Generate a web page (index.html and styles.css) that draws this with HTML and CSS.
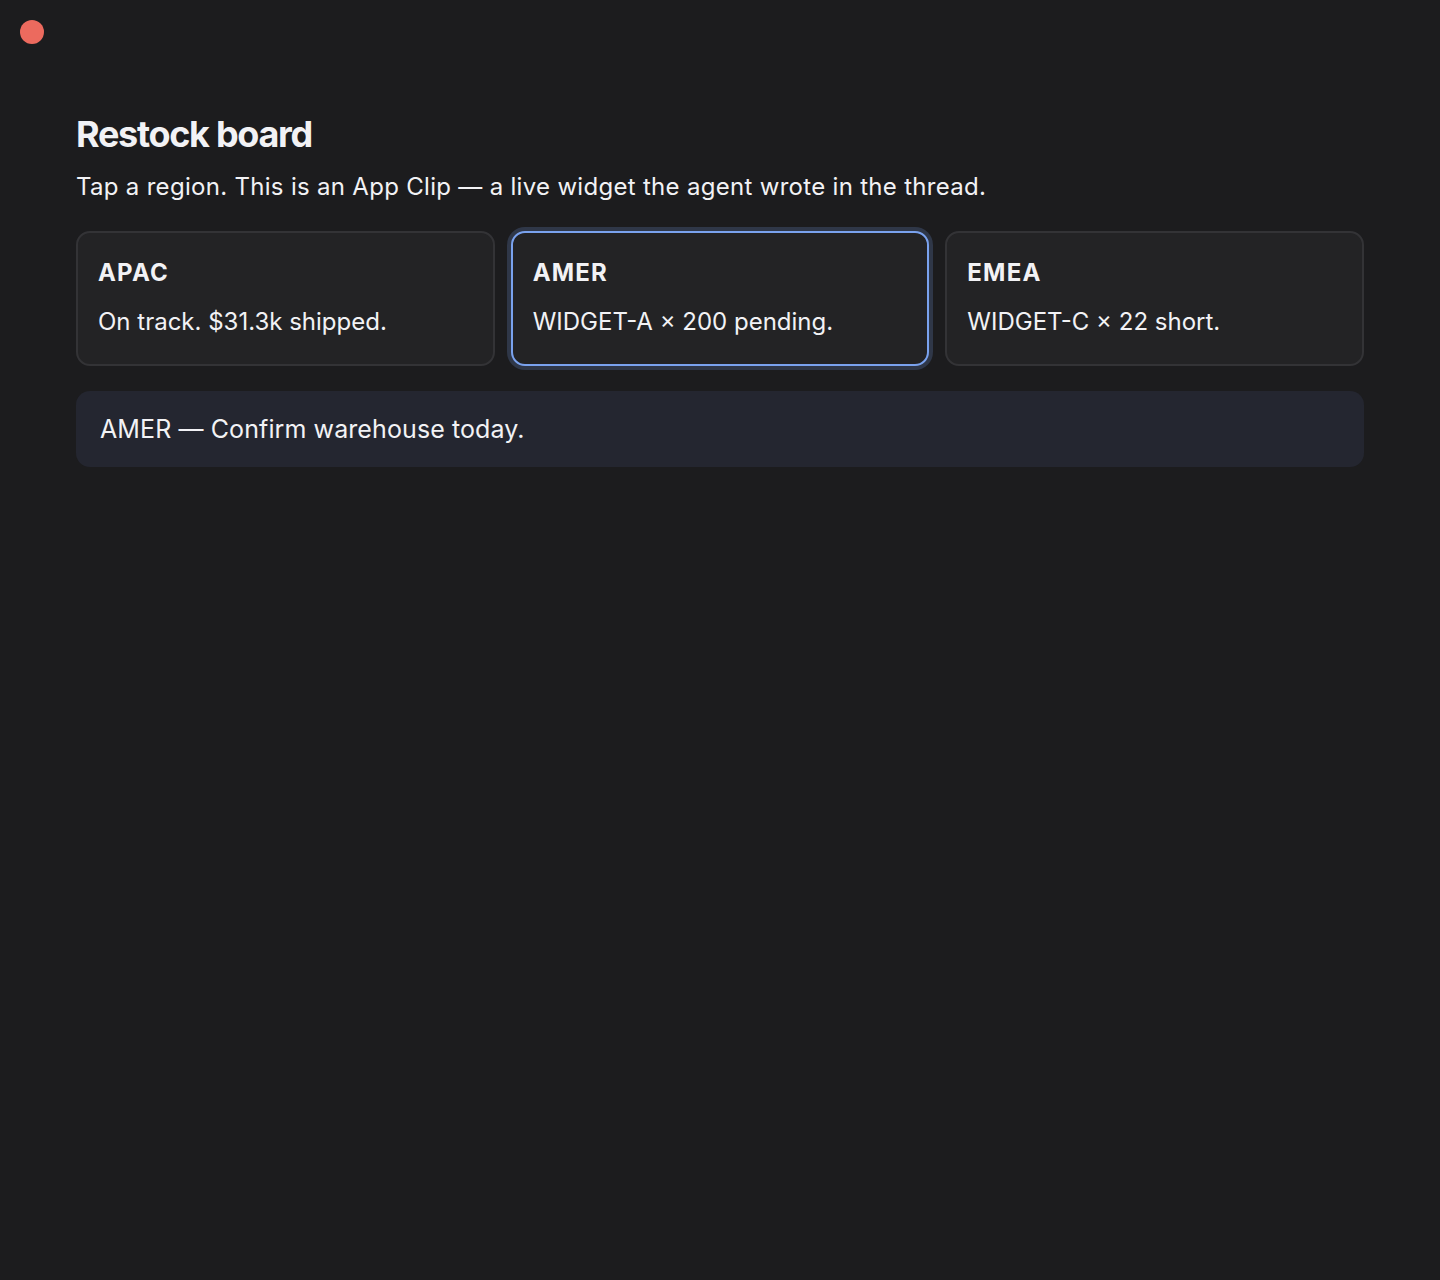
FILE: index.html
```html
<!DOCTYPE html>
<html lang="en">
<head>
<meta charset="utf-8">
<title>Restock board</title>
<link rel="stylesheet" href="styles.css">
</head>
<body>
<div class="window">
  <div class="titlebar"><span class="dot"></span></div>
  <main class="content">
    <h1 class="title">Restock board</h1>
    <p class="subtitle">Tap a region. This is an App Clip — a live widget the agent wrote in the thread.</p>
    <div class="cards">
      <button class="card">
        <span class="card-label">APAC</span>
        <span class="card-body">On track. $31.3k shipped.</span>
      </button>
      <button class="card card--active">
        <span class="card-label">AMER</span>
        <span class="card-body">WIDGET-A × 200 pending.</span>
      </button>
      <button class="card">
        <span class="card-label">EMEA</span>
        <span class="card-body">WIDGET-C × 22 short.</span>
      </button>
    </div>
    <div class="note">AMER — Confirm warehouse today.</div>
  </main>
</div>
</body>
</html>
```

FILE: styles.css
```css
html, body {
  margin: 0;
  padding: 0;
  background: #1c1c1e;
}
body {
  font-family: Inter, "Noto Sans", "Liberation Sans", sans-serif;
  color: #f2f2f5;
  min-height: 1280px;
}
.titlebar {
  height: 64px;
  padding: 20px 0 0 20px;
  box-sizing: border-box;
}
.dot {
  display: block;
  width: 24px;
  height: 24px;
  border-radius: 50%;
  background: #ec6a5e;
}
.content {
  padding: 44px 76px 0 76px;
}
.title {
  margin: 0;
  font-size: 36px;
  line-height: 52px;
  font-weight: 700;
  letter-spacing: -1.3px;
  color: #f2f2f5;
}
.subtitle {
  margin: 11px 0 0 0;
  font-size: 24px;
  line-height: 32px;
  font-weight: 400;
  letter-spacing: 0.3px;
  color: #f2f2f5;
}
.cards {
  margin-top: 28px;
  display: grid;
  grid-template-columns: repeat(3, 1fr);
  gap: 16px;
}
.card {
  display: flex;
  flex-direction: column;
  align-items: flex-start;
  gap: 19px;
  text-align: left;
  font-family: inherit;
  color: #f2f2f5;
  background: #232325;
  border: 2px solid #333336;
  border-radius: 14px;
  padding: 25px 20px 20px 20px;
  height: 135px;
  box-sizing: border-box;
  cursor: pointer;
}
.card--active {
  border-color: #7aa2ee;
  box-shadow: 0 0 0 4px #2f3748;
}
.card-label {
  font-size: 24px;
  line-height: 30px;
  font-weight: 700;
  letter-spacing: 1.2px;
}
.card-body {
  font-size: 24px;
  line-height: 30px;
  font-weight: 400;
}
.note {
  margin-top: 25px;
  background: #242630;
  border-radius: 14px;
  padding: 22px 24px 22px 24px;
  font-size: 25px;
  line-height: 32px;
  letter-spacing: 0.1px;
  color: #f2f2f5;
}
```
